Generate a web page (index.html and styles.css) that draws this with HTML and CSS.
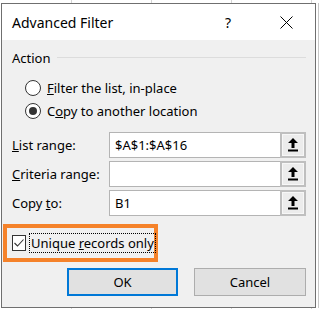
FILE: index.html
```html
<!DOCTYPE html>
<html lang="en">
<head>
    <meta charset="UTF-8">
    <title>Advanced Filter</title>
    <link rel="stylesheet" href="styles.css">
</head>
<body>
    <div class="dialog">
        <div class="title-bar">
            <span class="title">Advanced Filter</span>
            <span class="help">?</span>
            <span class="close">
                <svg width="13" height="13" viewBox="0 0 13 13"><path d="M0.5 0.5 L12.5 12.5 M12.5 0.5 L0.5 12.5" stroke="#000" stroke-width="1" fill="none"/></svg>
            </span>
        </div>

        <div class="content">
            <div class="group-label">Action</div>

            <label class="radio-row">
                <span class="radio"></span>
                <span><u>F</u>ilter the list, in-place</span>
            </label>
            <label class="radio-row">
                <span class="radio checked"></span>
                <span>C<u>o</u>py to another location</span>
            </label>

            <div class="fields">
                <div class="field">
                    <span class="field-label"><u>L</u>ist range:</span>
                    <span class="input">$A$1:$A$16</span>
                    <span class="range-btn">
                        <svg width="10" height="14" viewBox="0 0 10 14"><path d="M5 0 L10 5 L6.5 5 L6.5 10 L3.5 10 L3.5 5 L0 5 Z" fill="#000"/><rect x="0" y="11.5" width="10" height="2" fill="#000"/></svg>
                    </span>
                </div>
                <div class="field">
                    <span class="field-label"><u>C</u>riteria range:</span>
                    <span class="input"></span>
                    <span class="range-btn">
                        <svg width="10" height="14" viewBox="0 0 10 14"><path d="M5 0 L10 5 L6.5 5 L6.5 10 L3.5 10 L3.5 5 L0 5 Z" fill="#000"/><rect x="0" y="11.5" width="10" height="2" fill="#000"/></svg>
                    </span>
                </div>
                <div class="field">
                    <span class="field-label">Copy <u>t</u>o:</span>
                    <span class="input">B1</span>
                    <span class="range-btn">
                        <svg width="10" height="14" viewBox="0 0 10 14"><path d="M5 0 L10 5 L6.5 5 L6.5 10 L3.5 10 L3.5 5 L0 5 Z" fill="#000"/><rect x="0" y="11.5" width="10" height="2" fill="#000"/></svg>
                    </span>
                </div>
            </div>

            <div class="highlight">
                <span class="checkbox">
                    <svg width="12" height="12" viewBox="0 0 12 12"><path d="M1.5 6 L4.5 9 L10.5 2.5" stroke="#333" stroke-width="1.1" fill="none"/></svg>
                </span>
                <span class="check-text">Unique <u>r</u>ecords only</span>
            </div>

            <div class="buttons">
                <button class="btn default">OK</button>
                <button class="btn">Cancel</button>
            </div>
        </div>
    </div>
</body>
</html>
```

FILE: styles.css
```css
body {
    margin: 0;
    padding: 3px 0 0 1px;
    font-family: "Noto Sans", "Open Sans", sans-serif;
    font-size: 13px;
    color: #000;
    background-color: #fff;
    background-image: repeating-linear-gradient(to right, transparent 0, transparent 71px, #d4d4d4 71px, #d4d4d4 72px, transparent 72px, transparent 80px);
    height: 309px;
    box-sizing: border-box;
    overflow: hidden;
}

.dialog {
    width: 315px;
    height: 305px;
    box-sizing: border-box;
    border: 1px solid #6f6f6f;
    background-color: #f0f0f0;
    box-shadow: 2px 0 0 #fff, 3px 0 0 #c8c8c8;
}

.title-bar {
    height: 36px;
    background-color: #fff;
    display: flex;
    align-items: center;
    padding-left: 10px;
    font-size: 14px;
}

.title {
    flex: 1;
}

.help {
    width: 12px;
    margin-right: 43px;
    font-size: 14px;
}

.close {
    display: flex;
    margin-right: 22px;
}

.content {
    padding: 8px 9px 0 10px;
}

.group-label {
    height: 20px;
    display: flex;
    align-items: center;
    gap: 6px;
}

.group-label::after {
    content: "";
    flex: 1;
    border-top: 1px solid #dcdcdc;
    margin-top: -1px;
}

.radio-row {
    height: 23px;
    display: flex;
    align-items: center;
    gap: 6px;
    padding-left: 13px;
}

.radio-row:first-of-type {
    margin-top: 8px;
}

.radio {
    width: 14px;
    height: 14px;
    border: 1px solid #333;
    border-radius: 50%;
    background-color: #fff;
    display: flex;
    align-items: center;
    justify-content: center;
}

.radio.checked::after {
    content: "";
    width: 8px;
    height: 8px;
    border-radius: 50%;
    background-color: #333;
}

.fields {
    margin-top: 10px;
    display: flex;
    flex-direction: column;
    gap: 3px;
}

.field {
    height: 26px;
    display: flex;
    align-items: center;
}

.field-label {
    width: 97px;
}

.input {
    width: 171px;
    height: 26px;
    box-sizing: border-box;
    border: 1px solid #b4b4b4;
    border-right: none;
    background-color: #fff;
    padding-left: 5px;
    display: flex;
    align-items: center;
}

.range-btn {
    width: 26px;
    height: 26px;
    box-sizing: border-box;
    border: 2px solid #bfbfbf;
    background-color: #ececec;
    box-shadow: inset 0 0 0 1px #f7f7f7;
    display: flex;
    align-items: center;
    justify-content: center;
}

.highlight {
    margin: 8px 0 0 -9px;
    width: 155px;
    height: 38px;
    box-sizing: border-box;
    border: 4px solid #f5822a;
    display: flex;
    align-items: center;
    padding-left: 5px;
    gap: 3px;
}

.checkbox {
    width: 14px;
    height: 14px;
    border: 1px solid #333;
    background-color: #fff;
    display: flex;
    align-items: center;
    justify-content: center;
}

.check-text {
    border: 1px dotted #000;
    padding: 0 1px;
    line-height: 18px;
    white-space: nowrap;
}

.buttons {
    margin-top: 6px;
    display: flex;
    justify-content: flex-end;
    gap: 16px;
}

.btn {
    width: 112px;
    height: 28px;
    font-family: inherit;
    font-size: 13px;
    background-color: #e1e1e1;
    border: 1px solid #adadad;
    padding: 0;
    color: #000;
}

.btn.default {
    width: 111px;
    border: 2px solid #0078d7;
}
```
